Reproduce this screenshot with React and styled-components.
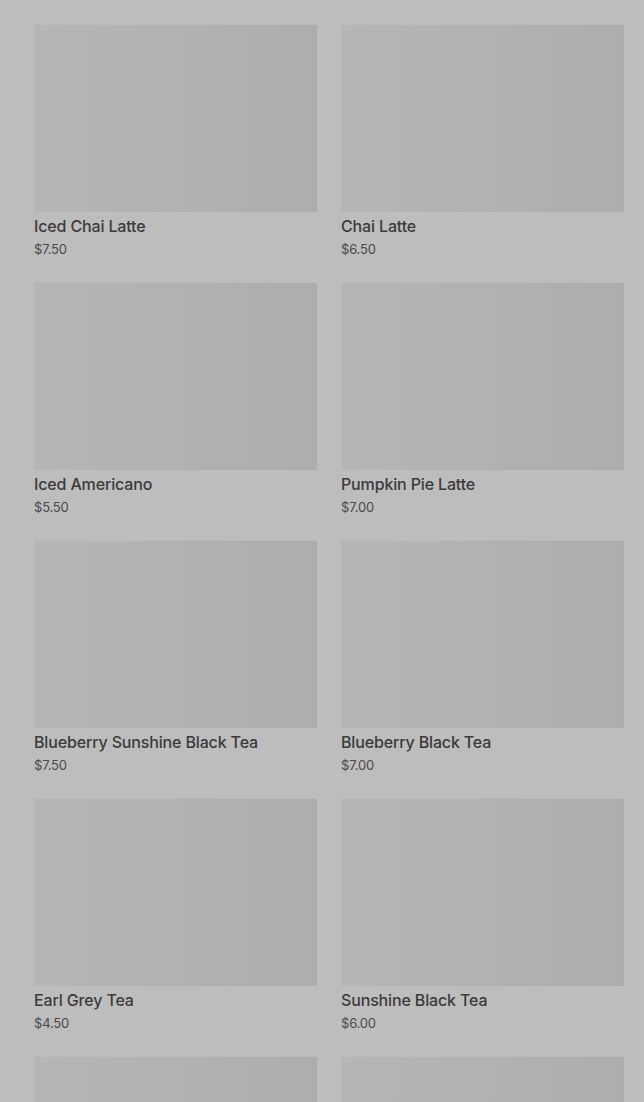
import React from 'react'
import styled, { createGlobalStyle } from 'styled-components'

const GlobalStyle = createGlobalStyle`
  html, body {
    margin: 0;
    padding: 0;
    background: #bdbdbd;
    font-family: Inter, 'Noto Sans', sans-serif;
    overflow: hidden;
  }
`

const Page = styled.div`
  width: 644px;
  height: 1102px;
  overflow: hidden;
  background: #bdbdbd;
  box-sizing: border-box;
  padding: 24px 20px 0 34px;
`

const Grid = styled.div`
  display: grid;
  grid-template-columns: 283px 283px;
  column-gap: 24px;
  row-gap: 25px;
`

const Card = styled.div`
  display: flex;
  flex-direction: column;
  height: 233px;
`

const Thumb = styled.div`
  height: 188px;
  background: linear-gradient(90deg, #b6b6b6 0%, #b2b2b2 45%, #adadad 100%);
  box-shadow: inset 0 1px 0 #bababa;
`

const Title = styled.div`
  margin-top: 4px;
  font-size: 16px;
  font-weight: 500;
  line-height: 20px;
  color: #3b3b3b;
  letter-spacing: -0.15px;
`

const Price = styled.div`
  margin-top: 5px;
  font-size: 13px;
  line-height: 16px;
  color: #4a4a4a;
  letter-spacing: -0.2px;
`

const items = [
  ['Iced Chai Latte', '$7.50'],
  ['Chai Latte', '$6.50'],
  ['Iced Americano', '$5.50'],
  ['Pumpkin Pie Latte', '$7.00'],
  ['Blueberry Sunshine Black Tea', '$7.50'],
  ['Blueberry Black Tea', '$7.00'],
  ['Earl Grey Tea', '$4.50'],
  ['Sunshine Black Tea', '$6.00'],
  ['', ''],
  ['', ''],
]

export default function App() {
  return (
    <Page>
      <GlobalStyle />
      <Grid>
        {items.map(([name, price], i) => (
          <Card key={i}>
            <Thumb />
            <Title>{name}</Title>
            <Price>{price}</Price>
          </Card>
        ))}
      </Grid>
    </Page>
  )
}
